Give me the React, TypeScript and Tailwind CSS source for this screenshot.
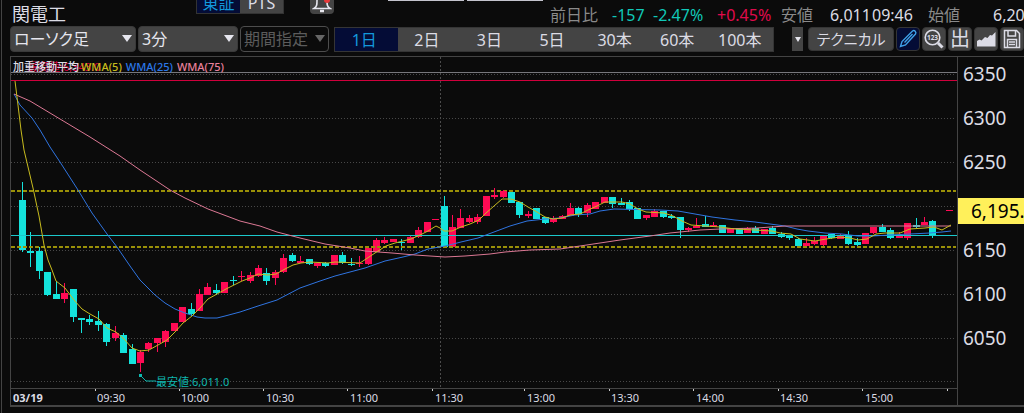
import { useState } from 'react'
import type { ReactNode } from 'react'

type Candle = {
  up: boolean
  top: number
  bottom: number
  high: number
  low: number
}

const CYAN = '#14e3dc'
const RED = '#ff0a54'

// [slot, direction, body top, body bottom, high, low], 3 minutes per slot
const rawCandles: [number, string, number, number, number, number][] = [
  [0, 'd', 200, 250, 182, 252],
  [1, 'd', 251, 253, 232, 267],
  [2, 'd', 251, 271, 247, 279],
  [3, 'd', 272, 295, 272, 296],
  [4, 'd', 294, 299, 281, 299],
  [5, 'u', 293, 299, 283, 303],
  [6, 'd', 289, 317, 289, 322],
  [7, 'd', 318, 320, 318, 333],
  [8, 'd', 319, 322, 315, 325],
  [9, 'd', 321, 325, 311, 331],
  [10, 'd', 324, 342, 323, 346],
  [11, 'u', 333, 338, 326, 341],
  [12, 'd', 335, 353, 333, 353],
  [13, 'd', 349, 364, 344, 364],
  [14, 'u', 352, 363, 350, 372],
  [15, 'u', 343, 349, 342, 352],
  [16, 'u', 338, 343, 338, 352],
  [17, 'u', 331, 342, 330, 347],
  [18, 'u', 323, 331, 323, 331],
  [19, 'u', 307, 322, 307, 322],
  [20, 'd', 309, 314, 303, 316],
  [21, 'u', 294, 311, 289, 311],
  [22, 'u', 287, 295, 283, 295],
  [23, 'd', 290, 293, 284, 295],
  [24, 'u', 282, 293, 282, 293],
  [25, 'd', 280, 281, 276, 285],
  [26, 'u', 276, 277, 271, 281],
  [27, 'u', 275, 281, 272, 283],
  [28, 'u', 268, 276, 265, 277],
  [29, 'd', 273, 281, 268, 285],
  [30, 'u', 272, 278, 270, 285],
  [31, 'u', 258, 272, 254, 273],
  [32, 'd', 255, 261, 253, 262],
  [33, 'u', 261, 263, 256, 263],
  [34, 'd', 259, 264, 259, 265],
  [35, 'u', 263, 266, 263, 268],
  [36, 'd', 263, 266, 262, 267],
  [37, 'u', 255, 265, 255, 265],
  [38, 'd', 255, 263, 252, 264],
  [39, 'd', 264, 265, 258, 266],
  [40, 'u', 263, 264, 256, 267],
  [41, 'u', 248, 264, 247, 265],
  [42, 'u', 240, 252, 238, 252],
  [43, 'u', 240, 243, 237, 244],
  [44, 'u', 239, 242, 239, 242],
  [45, 'd', 242, 243, 239, 250],
  [46, 'u', 237, 243, 236, 243],
  [47, 'u', 230, 237, 227, 238],
  [48, 'u', 222, 232, 222, 232],
  [49, 'u', 219, 220, 219, 220],
  [50, 'd', 206, 247, 196, 247],
  [51, 'u', 227, 247, 215, 248],
  [52, 'u', 218, 228, 209, 228],
  [53, 'u', 218, 222, 215, 223],
  [54, 'u', 217, 222, 214, 224],
  [55, 'u', 196, 216, 196, 216],
  [56, 'u', 195, 197, 188, 199],
  [57, 'u', 191, 197, 190, 198],
  [58, 'd', 192, 203, 192, 203],
  [59, 'd', 202, 215, 202, 218],
  [60, 'u', 214, 216, 211, 218],
  [61, 'd', 208, 219, 208, 219],
  [62, 'd', 217, 223, 217, 224],
  [63, 'u', 218, 222, 216, 223],
  [64, 'u', 216, 219, 215, 219],
  [65, 'u', 208, 216, 203, 216],
  [66, 'd', 208, 214, 207, 217],
  [67, 'u', 205, 213, 203, 217],
  [68, 'u', 202, 209, 202, 209],
  [69, 'u', 197, 203, 197, 203],
  [70, 'd', 197, 204, 197, 208],
  [71, 'd', 203, 205, 198, 205],
  [72, 'd', 202, 209, 200, 211],
  [73, 'd', 208, 219, 208, 219],
  [74, 'u', 215, 218, 215, 220],
  [75, 'u', 211, 217, 209, 217],
  [76, 'd', 211, 217, 211, 218],
  [77, 'd', 216, 218, 214, 219],
  [78, 'd', 217, 230, 217, 238],
  [79, 'u', 228, 230, 227, 232],
  [80, 'u', 226, 228, 218, 228],
  [81, 'd', 224, 227, 216, 227],
  [82, 'u', 225, 227, 222, 227],
  [83, 'd', 225, 233, 225, 233],
  [84, 'u', 228, 233, 228, 233],
  [85, 'd', 228, 234, 228, 234],
  [86, 'u', 228, 233, 227, 233],
  [87, 'd', 228, 233, 226, 233],
  [88, 'u', 229, 234, 229, 234],
  [89, 'd', 228, 234, 226, 234],
  [90, 'd', 234, 237, 232, 238],
  [91, 'd', 236, 238, 235, 240],
  [92, 'd', 239, 246, 238, 247],
  [93, 'u', 243, 246, 238, 246],
  [94, 'u', 241, 244, 237, 245],
  [95, 'u', 235, 245, 235, 247],
  [96, 'd', 234, 238, 234, 239],
  [97, 'u', 236, 239, 234, 239],
  [98, 'd', 235, 244, 231, 245],
  [99, 'd', 242, 245, 238, 247],
  [100, 'u', 233, 244, 233, 244],
  [101, 'u', 227, 233, 227, 234],
  [102, 'd', 227, 232, 224, 232],
  [103, 'd', 230, 238, 228, 239],
  [104, 'u', 236, 238, 232, 238],
  [105, 'u', 223, 238, 223, 240],
  [106, 'd', 225, 227, 218, 228],
  [107, 'u', 222, 225, 217, 225],
  [108, 'd', 221, 236, 220, 238],
  [110, 'u', 210, 211, 210, 211],
]

const candles: (Candle & { slot: number })[] = rawCandles.map(
  ([slot, dir, top, bottom, high, low]) => ({ slot, up: dir === 'u', top, bottom, high, low })
)

const wma5 =
  '15,81 17,97 21,130 24,150 33,188 39,216 44,245 48,260 52,270 56,281 65,288 74,300 82,309 90,314 99,319 107,328 116,332 124,339 132,348 140,351 149,350 158,345 167,340 175,332 183,323 192,316 200,308 208,299 217,294 226,289 234,285 242,281 250,278 258,274 268,275 276,274 285,269 293,265 301,263 310,262 328,263 335,262 360,263 369,257 378,251 386,246 395,243 403,241 411,239 420,235 428,231 436,226 440,228 444,231 452,231 461,227 470,224 479,220 486,213 494,206 502,199 511,199 520,202 528,207 537,212 545,217 553,219 562,218 570,215 580,214 588,210 597,206 605,202 622,202 630,204 638,209 646,212 664,213 673,216 682,221 691,225 705,226 720,227 735,229 755,230 772,231 780,233 791,234 800,239 815,241 826,239 840,237 850,238 858,240 867,239 876,234 885,233 900,233 910,229 925,228 934,227 942,230 951,225'
const wma25 =
  '14,94 20,105 32,118 40,130 50,147 60,162 78,190 92,213 107,234 117,247 130,266 140,280 155,295 165,303 175,309 185,313 197,317 205,318 217,318 225,316 240,312 258,306 277,300 300,288 320,281 335,276 350,272 365,268 385,261 403,257 415,254 428,249 445,246 461,242 478,238 494,232 510,226 527,221 545,219 560,218 575,215 590,214 600,211 614,209 660,210 678,211 695,214 712,217 735,220 755,222 770,224 785,226 797,229 808,231 825,233 842,234 858,236 872,236 890,235 910,234 930,233 942,232 951,231'
const wma75 =
  '14,94 30,101 60,119 90,137 120,156 140,170 155,180 170,190 185,198 208,209 240,221 260,226 277,232 300,238 325,244 350,248 365,251 392,253 415,255 445,257 465,256 490,254 505,252 530,250 560,249 580,246 600,243 620,240 650,236 670,233 700,230 720,229 757,228 785,226 951,226'

const gridLines = [74, 118, 162, 206, 250, 294, 338, 381]
const prices = ['6350', '6300', '6250', '6200', '6150', '6100', '6050']
const times = ['09:30', '10:00', '10:30', '11:00', '11:30', '13:00', '13:30', '14:00', '14:30', '15:00']
const ticks = [95, 179, 263, 347, 432, 524, 609, 693, 778, 862, 947]
const ranges = ['1日', '2日', '3日', '5日', '30本', '60本', '100本']

function Chart() {
  return (
    <svg
      viewBox="11 57 946 331"
      preserveAspectRatio="none"
      className="block h-[331px] w-full"
      role="img"
      aria-label="関電工 3分足"
    >
      {gridLines.map((y) => (
        <line key={y} x1="11" x2="956" y1={y + 0.5} y2={y + 0.5} stroke="#484848" strokeDasharray="1 2" />
      ))}
      <line x1="440.5" x2="440.5" y1="57" y2="388" stroke="#4c4c4c" strokeDasharray="2 2" />
      <line x1="11" x2="957" y1="72.5" y2="72.5" stroke="#77777c" />
      <line x1="11" x2="957" y1="80.5" y2="80.5" stroke="#d0003c" />
      <line x1="11" x2="956" y1="191" y2="191" stroke="#9a9008" strokeWidth="2" strokeDasharray="4 2" />

      {candles.map((c) => {
        const x = Math.round(22 + c.slot * 8.43)
        const color = c.up ? RED : CYAN
        return (
          <g key={c.slot} fill={color} shapeRendering="crispEdges">
            <rect x={x} y={c.high} width="1" height={c.low - c.high} />
            <rect x={x - 3} y={c.top} width="7" height={c.bottom - c.top} />
          </g>
        )
      })}

      <line x1="11" x2="956" y1="247" y2="247" stroke="#9a9008" strokeWidth="2" strokeDasharray="4 2" />
      <line x1="11" x2="957" y1="235.5" y2="235.5" stroke="#1cc8cc" />
      <polyline points={wma25} fill="none" stroke="#2f74e0" />
      <polyline points={wma75} fill="none" stroke="#dc7894" />
      <polyline points={wma5} fill="none" stroke="#c8bc1e" />

      {/* pointer to the day's low */}
      <rect x="139" y="374" width="3" height="3" fill="#0fb8b0" />
      <polyline points="141,376 146,381 156,381" fill="none" stroke="#0fb8b0" />
    </svg>
  )
}

function DropDown({ label, value, className, disabled }: { label: string; value: string; className: string; disabled?: boolean }) {
  return (
    <div className={`relative h-[26px] ${className}`}>
      <select
        aria-label={label}
        disabled={disabled}
        className={`h-full w-full appearance-none rounded-sm border pl-[3px] text-[16px] leading-6 [font-feature-settings:'palt'] ${
          disabled ? 'border-[#4d4d4d] bg-[#0b0b0b] text-[#5c5c5c]' : 'border-[#3a3a3a] bg-[#444] text-[#e6e6ee]'
        }`}
      >
        <option>{value}</option>
      </select>
      <svg
        viewBox="0 0 10 7"
        className={`pointer-events-none absolute top-[9px] right-1 h-[7px] w-2.5 ${disabled ? 'fill-[#666]' : 'fill-[#e6e6ee]'}`}
      >
        <path d="M0 0h10L5 7z" />
      </svg>
    </div>
  )
}

function ToolButton({ label, active, children }: { label: string; active?: boolean; children: ReactNode }) {
  return (
    <button
      aria-label={label}
      className={`flex h-6 w-6 shrink-0 items-center justify-center rounded-sm border border-[#353535] ${
        active ? 'bg-[#040c36] text-[#3fa0e8]' : 'bg-[#444] text-[#dcdce6]'
      }`}
    >
      {children}
    </button>
  )
}

export default function App() {
  const [market, setMarket] = useState('東証')
  const [range, setRange] = useState('1日')

  return (
    <div className="overflow-hidden bg-[#0b0b0b] pl-px font-['Noto_Sans','Noto_Sans_CJK_JP',sans-serif] text-[#dcdce4]">
      <div className="h-[413px] border-l border-[#444]">
        {/* Header */}
        <header className="flex h-[26px] overflow-hidden whitespace-nowrap">
          <h1 className="mt-1 w-[194px] shrink-0 pl-2.5 text-[18px] leading-5">関電工</h1>
          <div className="-mt-2.5 flex h-6 shrink-0 border border-[#333]">
            {['東証', 'PTS'].map((m) => (
              <button
                key={m}
                onClick={() => setMarket(m)}
                className={`w-[43px] pt-0.5 text-[16px] leading-5 ${market === m ? 'bg-[#040c36] text-[#1398dc]' : 'bg-[#444]'}`}
              >
                {m}
              </button>
            ))}
          </div>
          <button aria-label="アラート" className="-mt-2.5 ml-[26px] flex h-6 w-6 shrink-0 items-end justify-center rounded-sm bg-[#444]">
            <svg viewBox="0 0 20 22" className="h-[22px] w-5" fill="none" stroke="#e6e6ee" strokeWidth="1.6">
              <path d="M2 16.5c3-2 3-4 3-8a5 5 0 0 1 10 0c0 4 0 6 3 8z" />
              <path d="M8 19h4" strokeWidth="2.5" />
              <circle cx="15" cy="8" r="3" fill="#e83a3a" stroke="none" />
            </svg>
          </button>
          <div className="ml-[54px] flex shrink-0 gap-[3px]">
            <span className="h-px w-[76px] bg-[#c4c4ce]" />
            <span className="h-px w-[76px] bg-[#c4c4ce]" />
          </div>
          <dl className="mt-1.5 ml-[7px] flex flex-1 text-[16px] leading-[18px]">
            <dt className="w-[62px] shrink-0 text-[#8a8a8a]">前日比</dt>
            <dd className="w-[41px] shrink-0 text-[#10c8b8]">-157</dd>
            <dd className="w-16 shrink-0 text-[#10c8b8]">-2.47%</dd>
            <dd className="w-16 shrink-0 text-[#e00a4c]">+0.45%</dd>
            <dt className="w-[49px] shrink-0 text-[#8a8a8a]">安値</dt>
            <dd className="w-[42px] shrink-0">6,011</dd>
            <dd className="w-[56px] shrink-0">09:46</dd>
            <dt className="w-[65px] shrink-0 text-[#8a8a8a]">始値</dt>
            <dd className="shrink-0">6,200</dd>
          </dl>
        </header>

        {/* Toolbar */}
        <div className="flex h-[30px] items-start pl-2">
          <DropDown label="足種" value="ローソク足" className="w-[126px] shrink-0" />
          <DropDown label="間隔" value="3分" className="ml-0.5 w-[100px] shrink-0" />
          <DropDown label="期間" value="期間指定" className="ml-0.5 w-[89px] shrink-0" disabled />
          <div className="mt-px ml-[5px] flex h-[25px] w-[440px] shrink-0 border border-[#353535]">
            {ranges.map((r) => (
              <button
                key={r}
                onClick={() => setRange(r)}
                className={`flex-1 pr-1 text-[16px] leading-6 ${
                  range === r ? 'bg-[#040c36] text-[#1398dc]' : 'bg-[#444]'
                }`}
              >
                {r}
              </button>
            ))}
          </div>
          <div className="mt-px ml-auto flex shrink-0 gap-0.5">
            <button aria-label="その他" className="mr-[3px] flex h-6 w-[11px] items-center justify-center bg-[#444]">
              <svg viewBox="0 0 6 5" className="h-[5px] w-1.5 fill-[#e6e6ee]">
                <path d="M0 0h6L3 5z" />
              </svg>
            </button>
            <button className="h-6 w-[86px] rounded-sm border border-[#353535] bg-[#444] text-[15px] leading-5 whitespace-nowrap [font-feature-settings:'palt']">
              テクニカル
            </button>
            <ToolButton label="描画" active>
              <svg viewBox="0 0 20 20" className="h-5 w-5 shrink-0" fill="none" stroke="currentColor" strokeWidth="1.4">
                <path d="M2.500 17.500l1.500-5L14.500 2q1.500-1 2.700.3t.3 2.700L7.500 16z" />
                <path d="M6.500 13.500l8-8.500" />
              </svg>
            </ToolButton>
            <ToolButton label="数値表示">
              <svg viewBox="0 0 20 20" className="h-5 w-5 shrink-0" fill="none" stroke="currentColor">
                <circle cx="8.500" cy="8.500" r="7.300" strokeWidth="1.6" />
                <path d="M14 14l4.500 4.500" strokeWidth="3" />
                <text x="8.500" y="11" textAnchor="middle" fontSize="6.500" fontWeight="700" fill="currentColor" stroke="none">
                  123
                </text>
              </svg>
            </ToolButton>
            <ToolButton label="出来高">
              <span className="text-[20px] leading-5">出</span>
            </ToolButton>
            <ToolButton label="チャート">
              <svg viewBox="0 0 20 20" className="h-5 w-5 shrink-0" fill="currentColor">
                <path d="M1 17.500V12l2.500-1.500 2 1L9 8l2.500 1L14 6l2 .5L19.500 3v14.500z" />
              </svg>
            </ToolButton>
            <ToolButton label="保存">
              <svg viewBox="0 0 20 20" className="h-5 w-5 shrink-0" fill="none" stroke="currentColor" strokeWidth="1.5">
                <path d="M2.500 1.500h12l3 3v14h-15z" />
                <path d="M6 2v5h7.500V2M5.500 18v-7.500h9V18M7 13h6M7 15.500h6" />
              </svg>
            </ToolButton>
          </div>
        </div>

        {/* Chart panel */}
        <main className="ml-2 flex border-t border-b-2 border-l border-[#444]">
          <div className="min-w-0 flex-1">
            <div className="relative">
              <Chart />
              <span className="absolute top-1 left-4 text-[11px] leading-3 whitespace-nowrap text-[#d0003c]">
                最高値:6,343.0
              </span>
              <div className="absolute top-1 left-0.5 flex gap-1 text-[11px] leading-3 font-medium whitespace-nowrap">
                <span className="w-16">加重移動平均</span>
                <span className="text-[#c8bc1e]">WMA(5)</span>
                <span className="text-[#2b78e8]">WMA(25)</span>
                <span className="text-[#e8809c]">WMA(75)</span>
              </div>
              <span className="absolute bottom-0 left-[145px] text-[11px] leading-3 whitespace-nowrap text-[#0fb8b0]">
                最安値:6,011.0
              </span>
            </div>
            <div className="relative h-[17px] border-t border-[#444]">
              <svg viewBox="11 0 946 3" preserveAspectRatio="none" className="absolute top-0 left-0 h-[3px] w-full">
                {ticks.map((x) => (
                  <rect key={x} x={x} y="0" width="1" height="2" fill="#ccc" />
                ))}
              </svg>
              <div className="grid grid-cols-[86fr_84fr_85fr_84fr_85fr_92fr_84fr_85fr_84fr_85fr_92fr] pt-px text-[11px] leading-4">
                <span className="pl-0.5 font-bold">03/19</span>
                {times.map((t) => (
                  <span key={t}>{t}</span>
                ))}
              </div>
            </div>
          </div>

          {/* Price axis */}
          <div className="relative w-[67px] shrink-0 border-l border-[#444] text-[19px]">
            <ul className="-mt-[5px] flex flex-col">
              {prices.map((p) => (
                <li key={p} className="h-11 pl-[5px] leading-[44px]">
                  {p === '6200' ? '' : p}
                </li>
              ))}
            </ul>
            <strong className="absolute top-[141px] left-0 h-[26px] w-full overflow-hidden bg-[#fff05a] pl-[13px] leading-[26px] font-normal text-black">
              6,195.0
            </strong>
          </div>
        </main>
      </div>
    </div>
  )
}
